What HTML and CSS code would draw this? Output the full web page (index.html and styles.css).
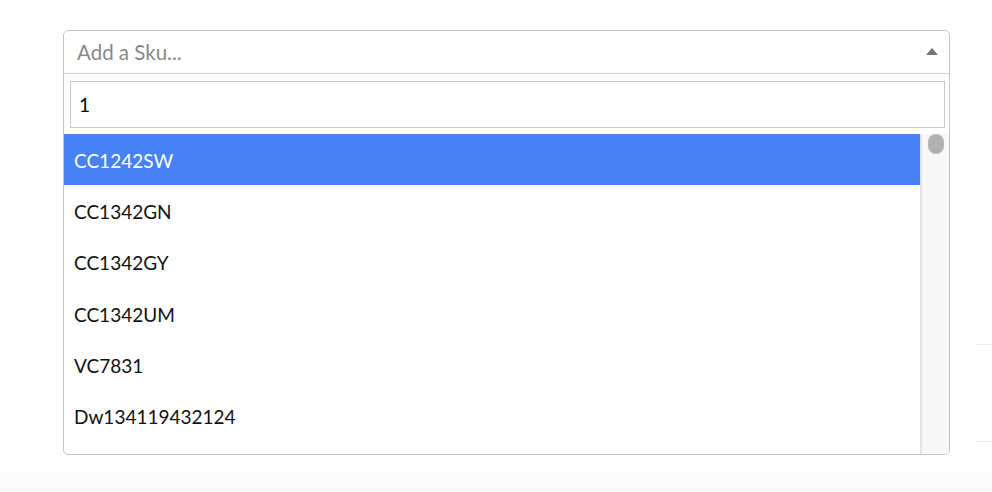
FILE: index.html
```html
<!DOCTYPE html>
<html lang="en">
<head>
<meta charset="UTF-8">
<meta name="viewport" content="width=device-width, initial-scale=1.0">
<title>Add a Sku</title>
<link rel="stylesheet" href="styles.css">
</head>
<body>
    <div class="page">
        <div class="sku-select">
            <div class="sku-header">
                <span class="placeholder">Add a Sku...</span>
                <span class="arrow"></span>
            </div>
            <div class="sku-search">
                <input type="text" value="1">
            </div>
            <div class="sku-results">
                <ul class="sku-list">
                    <li class="active">CC1242SW</li>
                    <li>CC1342GN</li>
                    <li>CC1342GY</li>
                    <li>CC1342UM</li>
                    <li>VC7831</li>
                    <li>Dw134119432124</li>
                </ul>
                <div class="scrollbar"><div class="thumb"></div></div>
            </div>
        </div>
        <div class="side-lines">
            <div class="line"></div>
            <div class="line"></div>
        </div>
    </div>
    <div class="bottom-fade"></div>
</body>
</html>
```

FILE: styles.css
```css
/* Basic styling */
body {
    font-family: Lato, "Liberation Sans", sans-serif;
    background-color: #fff;
    margin: 0;
    padding: 0;
    height: 492px;
    overflow: hidden;
}
.page {
    display: flex;
    padding: 30px 0 0 63px;
}
.sku-select {
    width: 885px;
    border: 1px solid #c4c4c4;
    border-radius: 5px;
    overflow: hidden;
}
.sku-header {
    display: flex;
    align-items: center;
    justify-content: space-between;
    height: 42px;
    padding: 0 11px 0 13px;
    border-bottom: 1px solid #cfcfcf;
}
.placeholder {
    font-size: 20.5px;
    color: #888;
}
.arrow {
    width: 0;
    height: 0;
    border-left: 6px solid transparent;
    border-right: 6px solid transparent;
    border-bottom: 7px solid #777;
    margin-top: -1px;
}
.sku-search {
    padding: 7px 4px 6px 6px;
}
.sku-search input {
    display: block;
    width: 100%;
    height: 47px;
    box-sizing: border-box;
    border: 1px solid #c8c8c8;
    padding: 0 8px;
    font-family: Lato, "Liberation Sans", sans-serif;
    font-size: 19px;
    color: #000;
    outline: none;
}
.sku-results {
    display: flex;
    height: 320px;
}
.sku-list {
    flex: 1;
    list-style: none;
    margin: 0;
    padding: 0;
    overflow: hidden;
}
.sku-list li {
    height: 51.2px;
    line-height: 53px;
    padding-left: 10px;
    font-size: 19px;
    color: #111;
}
.sku-list li.active {
    background-color: #4681f5;
    color: #fff;
}
.scrollbar {
    width: 27px;
    background-color: #f7f7f7;
    border-left: 2px solid #e4e4e4;
}
.thumb {
    width: 16px;
    height: 20px;
    margin-left: 6px;
    background-color: #b2b2b2;
    border-radius: 8px;
}
.side-lines {
    display: flex;
    flex-direction: column;
    gap: 96px;
    padding: 314px 0 0 25px;
    flex: 1;
}
.line {
    height: 1px;
    background-color: #ececec;
}
.bottom-fade {
    position: absolute;
    left: 0;
    right: 0;
    bottom: 0;
    height: 26px;
    background: linear-gradient(to bottom, #fff, #f9f9f9);
}
```
